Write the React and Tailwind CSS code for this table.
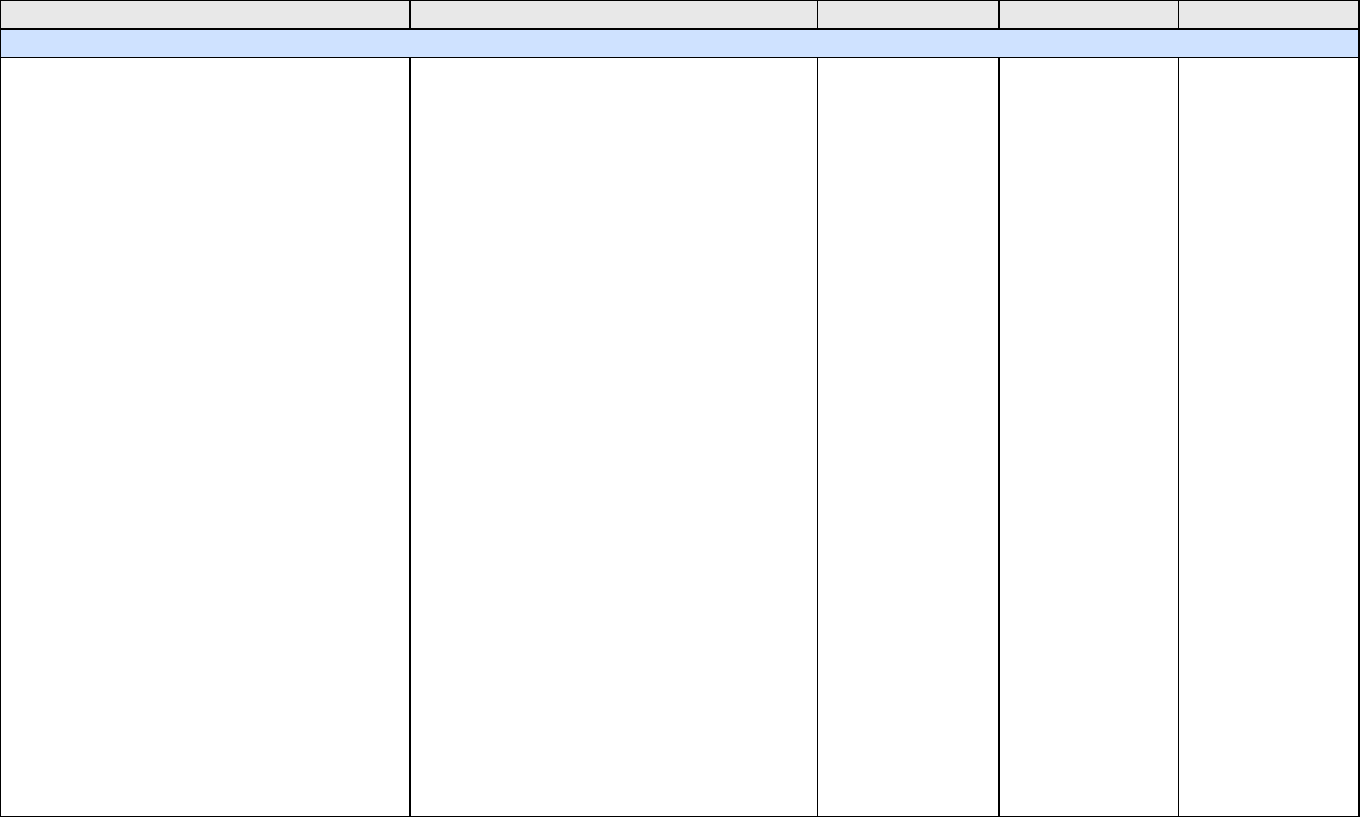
export default function App() {
  const Row = ({ h, bg }) => (
    <div className={`flex ${h} ${bg}`}>
      <div className="w-[408px]" />
      <div className="w-[2px] bg-black" />
      <div className="w-[406px]" />
      <div className="w-px bg-black" />
      <div className="w-[180px]" />
      <div className="w-[2px] bg-black" />
      <div className="w-[178px]" />
      <div className="w-px bg-black" />
      <div className="w-[179px]" />
    </div>
  );
  return (
    <div className="w-[1360px] h-[818px] bg-white font-['Liberation_Sans',sans-serif]">
      <div className="w-[1360px] border-l border-black flex flex-col">
        <div className="h-px bg-black w-[1360px] -ml-px" />
        <div className="flex">
          <div className="flex flex-col w-[1357px]">
            <Row h="h-[27px]" bg="bg-[#e8e8e8]" />
            <div className="h-[2px] bg-black" />
            <div className="h-[27px] bg-[#cfe2ff]" />
            <div className="h-px bg-black" />
            <Row h="h-[758px]" bg="bg-white" />
            <div className="h-px bg-black" />
          </div>
          <div className="w-[2px] bg-black" />
        </div>
      </div>
    </div>
  );
}
